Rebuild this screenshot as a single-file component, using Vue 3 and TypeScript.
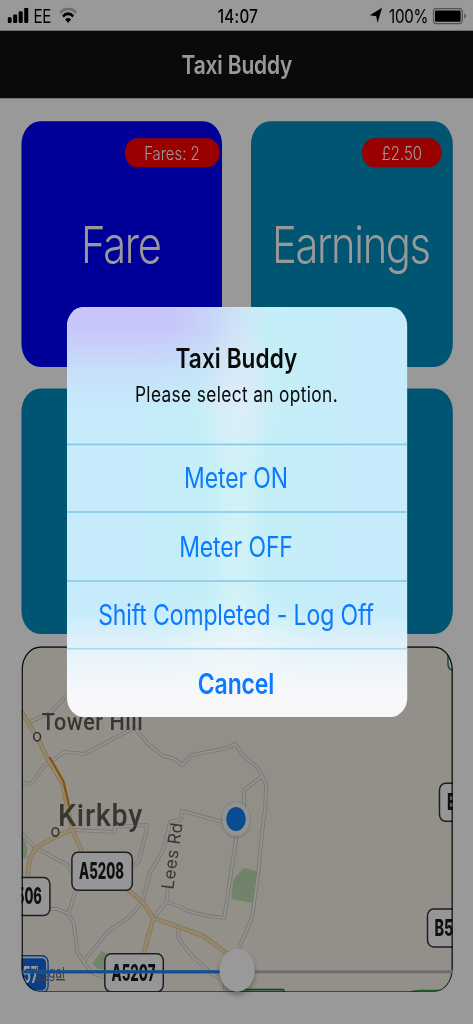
<template>
  <div class="screen">
    <div class="phone">
      <header class="status-bar">
        <div class="status-side">
          <svg class="signal" viewBox="0 0 17 10">
            <rect x="0" y="6.2" width="3.2" height="3.8" rx="0.8" />
            <rect x="4.4" y="4.4" width="3.2" height="5.6" rx="0.8" />
            <rect x="8.8" y="2.4" width="3.2" height="7.6" rx="0.8" />
            <rect x="13.2" y="0" width="3.2" height="10" rx="0.8" />
          </svg>
          <span class="carrier">EE</span>
          <svg class="wifi" viewBox="0 0 14 10">
            <path class="wifi-off" d="M0.7 3.4 A8.7 8.7 0 0 1 13.3 3.4" />
            <path d="M2.9 5.7 A5.7 5.7 0 0 1 11.1 5.7" />
            <path class="wifi-dot" d="M4.7 7.7 A3.2 3.2 0 0 1 9.3 7.7 L7 10 Z" />
          </svg>
        </div>
        <span class="time">14:07</span>
        <div class="status-side status-right">
          <svg class="arrow" viewBox="0 0 10 10">
            <path d="M9.9 0.1 L6.4 9.9 L5.2 5.6 L0.1 4.9 Z" />
          </svg>
          <span class="percent">100%</span>
          <svg class="battery" viewBox="0 0 27 11">
            <rect class="battery-case" x="0.5" y="0.5" width="23" height="10" rx="2.4" />
            <rect x="1.8" y="1.8" width="20.4" height="7.4" rx="1" />
            <path class="battery-tip" d="M25 3.7 Q26.4 4.3 26.4 5.5 Q26.4 6.7 25 7.3 Z" />
          </svg>
        </div>
      </header>

      <nav class="nav-bar">
        <h1>Taxi Buddy</h1>
      </nav>

      <main class="content">
        <div class="tiles">
          <div v-for="tile in tiles" :key="tile.id" class="tile" :class="tile.id">
            <span v-if="tile.badge" class="badge">{{ tile.badge }}</span>
            <span class="tile-label">{{ tile.label }}</span>
          </div>
        </div>

        <div class="map">
          <svg class="map-canvas" viewBox="21 646.4 432 346.2" preserveAspectRatio="none">
            <rect class="land" x="21" y="646" width="432" height="347" />

            <path v-for="(park, i) in parks" :key="'p' + i" class="park" :d="park" />
            <ellipse class="accuracy" cx="236" cy="819" rx="75" ry="92" />

            <path v-for="(road, i) in roads" :key="'rc' + i" class="road-case" :d="road" />
            <path v-for="(road, i) in roads" :key="'r' + i" class="road" :d="road" />
            <path v-for="(road, i) in mainRoads" :key="'mc' + i" class="main-case" :d="road" />
            <path v-for="(road, i) in mainRoads" :key="'m' + i" class="main" :d="road" />
            <path class="traffic" d="M49 757 L63 781 L69 807" />

            <g class="place">
              <ellipse cx="36.7" cy="736.7" rx="3.4" ry="4.2" />
              <ellipse cx="55" cy="832" rx="3.4" ry="4.2" />
            </g>
            <text class="town" transform="translate(41.3 730) scale(0.9 1)" textLength="112.5">Tower Hill</text>
            <text class="town big" transform="translate(57.5 826) scale(0.9 1)" textLength="94">Kirkby</text>
            <text class="street" transform="translate(173 890) rotate(-82)" textLength="67">Lees Rd</text>

            <g v-for="sign in signs" :key="sign.text" class="sign">
              <rect :x="sign.x" :y="sign.y" :width="sign.width" height="38" rx="6" ry="7" />
              <text :x="sign.textX" :y="sign.y + 27" :textLength="sign.textWidth" lengthAdjust="spacingAndGlyphs">{{ sign.text }}</text>
            </g>

            <g class="motorway">
              <rect class="motorway-edge" x="1" y="955.8" width="46.7" height="37" rx="6" ry="7" />
              <rect class="motorway-face" x="3" y="958.3" width="42.7" height="32.3" rx="4" ry="5" />
              <text x="22" y="983" textLength="16" lengthAdjust="spacingAndGlyphs">57</text>
            </g>
            <text class="legal" x="34.5" y="978" textLength="30" lengthAdjust="spacingAndGlyphs">Legal</text>

            <path class="green-sign" d="M448 655 V664 Q448 670 453 670" />
            <path class="green-sign fill" d="M240 994 V989.5 H283 L286 994" />
            <path class="green-edge" d="M411 991.5 L420 990.5 H441" />

            <ellipse class="dot-shadow" cx="235.8" cy="820" rx="15.5" ry="19" />
            <ellipse class="dot-ring" cx="235.8" cy="819" rx="13.8" ry="16.8" />
            <ellipse class="dot" cx="235.8" cy="819" rx="9.8" ry="12" />

            <rect class="frame" x="21.7" y="647.1" width="430.6" height="344.8" rx="18.4" ry="22.4" />
          </svg>
          <div class="slider">
            <div class="slider-fill" :style="{ width: zoomLevel + '%' }"></div>
            <div class="slider-thumb" :style="{ left: zoomLevel + '%' }"></div>
          </div>
        </div>
      </main>

      <div class="backdrop">
        <div class="alert" role="dialog">
          <div class="alert-head">
            <h2>Taxi Buddy</h2>
            <p>Please select an option.</p>
          </div>
          <button
            v-for="action in actions"
            :key="action.id"
            class="alert-button"
            :class="action.id"
          >
            <span>{{ action.label }}</span>
          </button>
        </div>
      </div>
    </div>
  </div>
</template>

<script setup lang="ts">
import { ref } from 'vue';

interface Tile {
  id: string;
  label: string;
  badge?: string;
}

interface Sign {
  text: string;
  x: number;
  y: number;
  width: number;
  textX: number;
  textWidth: number;
}

const zoomLevel = ref(50);

const tiles: Tile[] = [
  { id: 'fare', label: 'Fare', badge: 'Fares: 2' },
  { id: 'earnings', label: 'Earnings', badge: '£2.50' },
  { id: 'lower-left', label: '' },
  { id: 'lower-right', label: '' }
];

const actions = [
  { id: 'meter-on', label: 'Meter ON' },
  { id: 'meter-off', label: 'Meter OFF' },
  { id: 'log-off', label: 'Shift Completed - Log Off' },
  { id: 'cancel', label: 'Cancel' }
];

const signs: Sign[] = [
  { text: 'A5208', x: 71.5, y: 852.3, width: 60.5, textX: 78.7, textWidth: 45 },
  { text: 'A5207', x: 104.5, y: 953.9, width: 58.5, textX: 111.2, textWidth: 44 },
  { text: '506', x: -5, y: 877.5, width: 54.5, textX: 15.5, textWidth: 26 },
  { text: 'B5', x: 427.5, y: 909, width: 50, textX: 434.5, textWidth: 19 },
  { text: 'E', x: 439.5, y: 783.3, width: 50, textX: 447, textWidth: 9 }
];

const parks = [
  'M21 832 L27 848 L26 858 L21 858 Z',
  'M101 951 L92 963 L97 969 L108 969 V954 Z',
  'M243 868 L257 871 L252 903 L231 899 L233 880 Z'
];

const roads = [
  'M27 723 L50 713 L66 696',
  'M21 783 L30 784 L34 780 L44 765 L50 762 L64 752 L84 754 L128 731 L134 728 L148 744 L163 756 L172 758 L182 765 L192 755 L227 748 L235 744 L244 757 L256 766 L262 776 L266 785 L265 807 L262 832 L258 873 L252 917 L239 948',
  'M262 776 L244 790 L244 808',
  'M237 832 L224 918 L207 916 L187 911 L181 907 L166 902 L153 918',
  'M166 902 L168 885',
  'M222 822 L182 811 L180 820 L170 822 L163 850 L150 872 L142 902 L129 917 L107 932 L83 962',
  'M153 918 L161 909',
  'M50 909 L57 909 L68 914 L73 922 L77 952 L83 962 L92 973 L105 978',
  'M68 914 L76 888',
  'M71 830 L115 832 L114 827 L147 825 L144 840 L138 862 L131 868',
  'M21 833 L35 848 L67 865 L72 873',
  'M178 927 L178 938 L190 954 L210 973 L219 978'
];

const mainRoads = [
  'M20 710 L37 738 L49 762 L62 783 L66 802 L72 830 L83 855 L100 872 L128 890 L142 902 L153 918 L143 955',
  'M27 877 L29 860 L35 848 L55 837 L71 830',
  'M153 918 L178 927 L203 936 L227 954 L225 990'
];
</script>

<style>
body {
  margin: 0;
  background: #999999;
}
</style>

<style scoped>
.screen {
  width: 473px;
  height: 1024px;
  overflow: hidden;
}

/* 375x667 point layout stretched over the window */
.phone {
  position: relative;
  width: 375px;
  height: 667px;
  display: flex;
  flex-direction: column;
  background: #ffffff;
  font-family: Inter, "Liberation Sans", sans-serif;
  transform: scale(1.26133, 1.53523);
  transform-origin: 0 0;
}

.status-bar {
  height: 20px;
  padding: 0.6px 5px 0 6px;
  box-sizing: border-box;
  display: grid;
  grid-template-columns: 1fr auto 1fr;
  align-items: center;
  font-size: 12px;
  color: #000000;
}

.status-side {
  display: flex;
  align-items: center;
}

.status-right {
  justify-content: flex-end;
}

.signal {
  width: 17px;
  height: 10px;
}

.carrier {
  margin-left: 3.6px;
  letter-spacing: -0.3px;
}

.wifi {
  width: 14px;
  height: 10px;
  margin-left: 6.6px;
}

.wifi path {
  fill: none;
  stroke: #000000;
  stroke-width: 1.9;
}

.wifi .wifi-off {
  stroke: #b8b8b8;
}

.wifi .wifi-dot {
  fill: #000000;
  stroke: none;
}

.time {
  padding-left: 1.4px;
  font-weight: 500;
  letter-spacing: 0.25px;
}

.arrow {
  width: 10px;
  height: 10px;
}

.percent {
  margin: 0 3.6px 0 5.4px;
  letter-spacing: -0.2px;
}

.battery {
  width: 27px;
  height: 11px;
}

.battery-case {
  fill: none;
  stroke: #8a8a8a;
  stroke-width: 1;
}

.battery-tip {
  fill: #8a8a8a;
}

.nav-bar {
  height: 44px;
  display: flex;
  align-items: center;
  justify-content: center;
  background: #111111;
}

.nav-bar h1 {
  margin: 0;
  padding-left: 0.6px;
  font-size: 16.6px;
  font-weight: 600;
  letter-spacing: -0.12px;
  color: #ffffff;
}

.content {
  padding: 15.4px 16.3px 0 16.6px;
}

.tiles {
  display: grid;
  grid-template-columns: 159.6px 159.6px;
  grid-auto-rows: 159.6px;
  justify-content: space-between;
  row-gap: 14.2px;
}

.tile {
  position: relative;
  display: flex;
  align-items: center;
  justify-content: center;
  border-radius: 15px;
  background: #008ec0;
}

.tile.fare {
  background: #0000ff;
}

.tile-label {
  margin-right: 1.4px;
  font-size: 33px;
  font-weight: 350;
  letter-spacing: -1.05px;
  color: #ffffff;
}

.badge {
  position: absolute;
  top: 10.2px;
  right: 2.4px;
  box-sizing: border-box;
  width: 75px;
  height: 19.5px;
  padding-top: 0.9px;
  border-radius: 10px;
  background: #ff0000;
  color: #ffffff;
  font-size: 11.8px;
  font-weight: 350;
  line-height: 20px;
  text-align: center;
}

.earnings .badge {
  right: 8.6px;
  width: 63px;
}

.map {
  position: relative;
  height: 225.5px;
  margin-top: 8px;
}

.map-canvas {
  display: block;
  width: 100%;
  height: 100%;
  border-radius: 15px;
}

.land {
  fill: #f5f1e6;
}

.park {
  fill: #bddcae;
}

.accuracy {
  fill: #6f7c80;
  fill-opacity: 0.014;
}

.road-case,
.road,
.main-case,
.main,
.traffic {
  fill: none;
  stroke-linejoin: round;
}

.road-case {
  stroke: #cbc7c2;
  stroke-width: 3.8;
}

.road {
  stroke: #f4f3f2;
  stroke-width: 2;
}

.main-case {
  stroke: #e6bd88;
  stroke-width: 4.6;
}

.main {
  stroke: #f3e3b8;
  stroke-width: 3;
}

.traffic {
  stroke: #e5870f;
  stroke-width: 2.2;
}

.place ellipse {
  fill: #f5f1e6;
  stroke: #55534f;
  stroke-width: 1.6;
}

.town {
  font-family: Roboto, sans-serif;
  font-size: 24px;
  font-weight: 500;
  fill: #5c5a56;
}

.town.big {
  font-size: 32px;
}

.street {
  font-size: 17px;
  fill: #5c5a56;
}

.sign rect {
  fill: #fafafa;
  stroke: #333333;
  stroke-width: 1.5;
}

.sign text {
  font-size: 22.5px;
  font-weight: 800;
  fill: #1c1c1c;
}

.motorway-edge {
  fill: #f4f4f4;
  stroke: #1663d8;
  stroke-width: 1.3;
}

.motorway-face {
  fill: #1567e2;
}

.motorway text {
  font-size: 23px;
  font-weight: 700;
  fill: #ffffff;
}

.legal {
  font-size: 15px;
  fill: #6a6a6a;
  text-decoration: underline;
}

.green-sign {
  fill: none;
  stroke: #206a45;
  stroke-width: 1.3;
}

.green-sign.fill {
  fill: #7fbd8f;
}

.green-edge {
  fill: none;
  stroke: #3a9a4c;
  stroke-width: 1.6;
}

.dot-shadow {
  fill: #000000;
  fill-opacity: 0.08;
}

.dot-ring {
  fill: #f4f4f4;
}

.dot {
  fill: #127ef5;
}

.frame {
  fill: none;
  stroke: #111111;
  stroke-width: 1.4;
}

/* slider lies over the bottom edge of the map */
.slider {
  position: absolute;
  left: 0;
  right: 0;
  bottom: 12.6px;
  height: 2px;
  background: #b8b8b8;
}

.slider-fill {
  height: 2px;
  background: #1f80f6;
}

.slider-thumb {
  position: absolute;
  top: -13.8px;
  width: 28px;
  height: 28px;
  margin-left: -14px;
  border-radius: 50%;
  background: #ffffff;
  box-shadow: 0 2px 4px rgba(0, 0, 0, 0.3);
}

.backdrop {
  position: absolute;
  inset: 0;
  display: flex;
  align-items: center;
  justify-content: center;
  background: rgba(0, 0, 0, 0.4);
}

.alert {
  position: relative;
  width: 270px;
  height: 266.7px;
  display: flex;
  flex-direction: column;
  overflow: hidden;
  border-radius: 13px;
  background:
    linear-gradient(to bottom, rgba(248, 248, 250, 0) 74%, rgba(243, 247, 250, 0.75) 85%, #f8f8fa 95%),
    radial-gradient(ellipse 34px 50px at 50% 21%, rgba(224, 236, 248, 0.9), rgba(224, 236, 248, 0)),
    radial-gradient(ellipse 60px 40px at 50% 84%, rgba(232, 243, 249, 0.8), rgba(232, 243, 249, 0)),
    linear-gradient(to right, rgba(196, 239, 247, 0) 18%, rgba(196, 239, 247, 0.9) 41%, #d0f2f7 48%, #d0f2f7 52%, rgba(196, 239, 247, 0.9) 59%, rgba(196, 239, 247, 0) 86%),
    #c6ebfb;
}

/* blurred tint of the tile behind the top left corner */
.alert::before {
  content: "";
  position: absolute;
  top: 0;
  left: 0;
  width: 158px;
  height: 66px;
  background: linear-gradient(to bottom, #c8c5f9 20%, rgba(200, 208, 250, 0.45) 62%, rgba(200, 220, 250, 0) 100%);
  mask-image: linear-gradient(to right, #000000 52%, rgba(0, 0, 0, 0.5) 78%, transparent);
}

.alert-head {
  position: relative;
  height: 88.8px;
  box-sizing: border-box;
  padding-top: 21.5px;
  text-align: center;
  color: #0a0a0a;
}

.alert-head h2 {
  margin: 0;
  font-size: 17.9px;
  line-height: 23px;
  font-weight: 600;
  letter-spacing: 0.08px;
}

.alert-head p {
  margin: 4px 0 0;
  font-size: 13.7px;
  line-height: 17px;
  letter-spacing: 0.3px;
}

.alert-button {
  flex: 1;
  padding: 0 0.8px 0.8px 0;
  border: none;
  border-top: 0.8px solid #84c8e6;
  background: none;
  font-family: inherit;
  font-size: 18.2px;
  letter-spacing: -0.08px;
  color: #0a7aff;
  cursor: pointer;
}

.alert-button.cancel {
  font-weight: 600;
  border-top-color: #a9d6ec;
}
</style>
